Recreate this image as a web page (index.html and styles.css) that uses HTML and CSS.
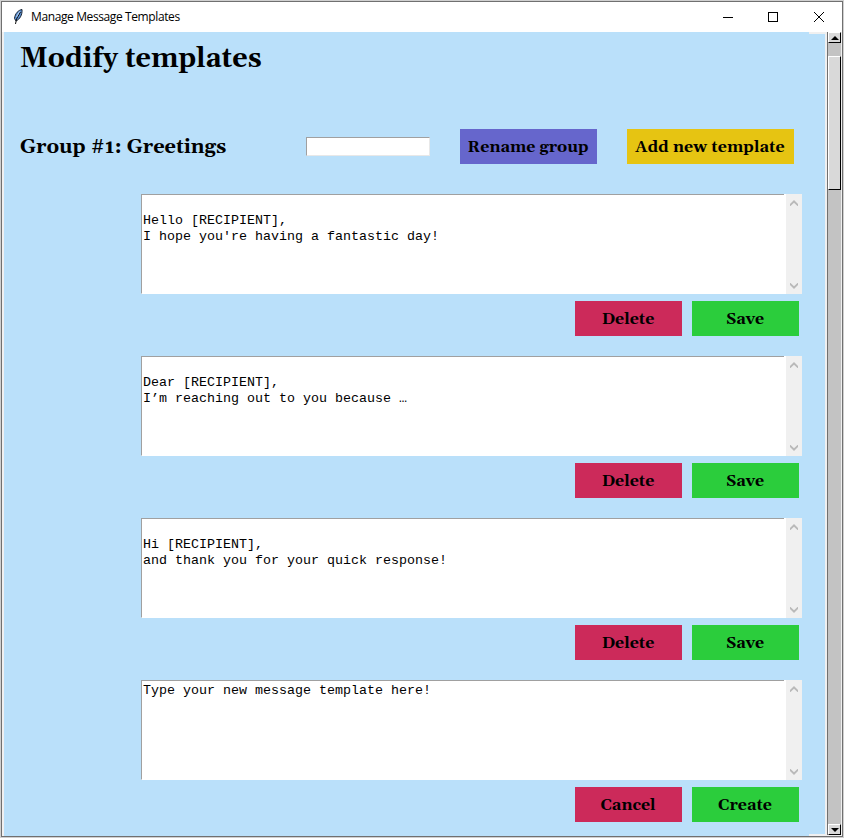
FILE: index.html
```html
<!DOCTYPE html>
<html lang="en">
<head>
<meta charset="utf-8">
<title>Manage Message Templates</title>
<link rel="stylesheet" href="styles.css">
</head>
<body>
<svg class="defs" width="0" height="0">
  <symbol id="up" viewBox="0 0 8 6"><path d="M0 4 4 0 8 4V6.500L4 2.800 0 6.500Z" fill="#b9b9b9"/></symbol>
  <symbol id="down" viewBox="0 0 8 6"><path d="M0 2 4 6 8 2V-.5L4 3.200 0-.5Z" fill="#b9b9b9"/></symbol>
</svg>
<div class="window">
  <header class="titlebar">
    <svg class="feather" width="12" height="16" viewBox="0 0 12 16">
      <path d="M10 .5C6.500 1 3 4.500 2.500 9.500L4 12C7.500 10.500 10.500 6 10 .5Z" fill="#5c92d6" stroke="#15202e"/>
      <path d="M8.500 3 4.500 10 3.500 15" fill="none" stroke="#111"/>
      <path d="M7.500 2.500 4.500 8" stroke="#b5d0f0"/>
    </svg>
    <span class="caption">Manage Message Templates</span>
    <svg class="controls" width="104" height="12" viewBox="0 0 104 12" fill="none" stroke="#000">
      <path d="M1 6.500H11"/><rect x="46.500" y="1.500" width="9" height="9"/><path d="M92 1 102 11M102 1 92 11"/>
    </svg>
  </header>
  <div class="body">
    <main class="canvas">
      <h1><span>Modify templates</span></h1>
      <section class="group">
        <h2><span>Group #1: Greetings</span></h2>
        <input class="entry" type="text" aria-label="Group name">
        <button class="btn rename"><span>Rename group</span></button>
        <button class="btn add"><span>Add new template</span></button>
      </section>
      <section class="template">
        <div class="editor"><pre class="text">

Hello [RECIPIENT],
I hope you're having a fantastic day!</pre><div class="scroll"><svg><use href="#up"/></svg><svg><use href="#down"/></svg></div></div>
        <div class="actions"><button class="btn red"><span>Delete</span></button><button class="btn green"><span>Save</span></button></div>
      </section>
      <section class="template">
        <div class="editor"><pre class="text">

Dear [RECIPIENT],
I’m reaching out to you because …</pre><div class="scroll"><svg><use href="#up"/></svg><svg><use href="#down"/></svg></div></div>
        <div class="actions"><button class="btn red"><span>Delete</span></button><button class="btn green"><span>Save</span></button></div>
      </section>
      <section class="template">
        <div class="editor"><pre class="text">

Hi [RECIPIENT],
and thank you for your quick response!</pre><div class="scroll"><svg><use href="#up"/></svg><svg><use href="#down"/></svg></div></div>
        <div class="actions"><button class="btn red"><span>Delete</span></button><button class="btn green"><span>Save</span></button></div>
      </section>
      <section class="template">
        <div class="editor"><pre class="text">Type your new message template here!</pre><div class="scroll"><svg><use href="#up"/></svg><svg><use href="#down"/></svg></div></div>
        <div class="actions"><button class="btn red"><span>Cancel</span></button><button class="btn green"><span>Create</span></button></div>
      </section>
    </main>
    <aside class="scrollbar">
      <div class="arrow"><svg width="8" height="4"><path d="M0 4 4 0 8 4Z"/></svg></div>
      <div class="track"><div class="thumb"></div></div>
      <div class="arrow"><svg width="8" height="4"><path d="M0 0H8L4 4Z"/></svg></div>
    </aside>
  </div>
</div>
</body>
</html>
```
FILE: styles.css
```css
* { box-sizing: border-box; }
body { margin: 0; width: 844px; height: 838px; padding: 1px; background: #d0d0d0; overflow: hidden; }
.defs { display: none; }
.window { width: 842px; height: 836px; border: 1px solid #707070; background: #f0f0f0; display: flex; flex-direction: column; }
.titlebar { height: 30px; flex: none; background: #fff; display: flex; align-items: center; padding: 0 16px 0 10px; }
.caption { font: 12px/16px "Open Sans", sans-serif; letter-spacing: -0.39px; margin-left: 7px; flex: 1; color: #000; }
.body { flex: 1; display: flex; min-height: 0; padding-left: 2px; }
.canvas {
  width: 821px;
  color: #000;
  font-family: Georgia, Gelasio, "Noto Serif", "DejaVu Serif", serif;
  background:
    linear-gradient(#f0f0f0, #f0f0f0) right top / 16px 2px no-repeat,
    linear-gradient(#f0f0f0, #f0f0f0) right bottom / 16px 2px no-repeat,
    #bae0fa;
}
h1, h2 { margin: 0; font-weight: bold; white-space: nowrap; }
h1 { font-size: 27px; line-height: 36px; padding: 9px 0 0 16px; height: 97px; }
.group { height: 35px; display: flex; align-items: center; padding-left: 16px; }
h2 { width: 286px; font-size: 20px; line-height: 24px; letter-spacing: -0.06px; }
.entry { width: 124px; height: 19px; padding: 0; border: 1px solid; border-color: #a0a0a0 #e8e8e8 #e8e8e8 #a0a0a0; background: #fff; margin-right: 30px; }
.btn { border: 0; padding: 1px 1px 0 0; height: 35px; color: #000; font-family: inherit; font-weight: bold; font-size: 16px; line-height: 34px; white-space: nowrap; }
.btn span, h1 span, h2 span { display: inline-block; }
.rename { width: 137px; background: #6666cc; margin-right: 30px; }
.add { width: 167px; background: #e6c412; letter-spacing: 0.08px; }
.template { height: 132px; margin: 30px 0 0 137px; width: 661px; }
.editor { height: 100px; display: flex; background: #fff; }
.text { flex: 1; margin: 0 2px 0 0; padding: 2px 0 0 1px; border: 1px solid; border-color: #a0a0a0 #fff #fff #a0a0a0; border-right: 0; font: 13.6px/16px "Liberation Mono", monospace; font-size: 13.333px; white-space: pre; }
.scroll { width: 16px; background: #f0f0f0; display: flex; flex-direction: column; justify-content: space-between; align-items: center; padding: 6px 1px 5px 0; }
.scroll svg { width: 8px; height: 6px; overflow: visible; }
.actions { display: flex; justify-content: flex-end; gap: 10px; padding: 7px 3px 0 0; }
.actions .btn { width: 107px; }
.red { background: #cc2a5a; }
.green { background: #2bcd3c; }
.scrollbar { margin: 0 0 1px 2px; width: 14px; border-left: 1px solid #707070; background: #c3c3c3; display: flex; flex-direction: column; }
.arrow { height: 11px; background: #d9d9d9; border: 1px solid; border-color: #fff #000 #000 #fff; display: flex; align-items: center; justify-content: center; }
.track { flex: 1; padding-top: 13px; }
.thumb { height: 134px; background: #d9d9d9; border: 1px solid; border-color: #fff #000 #000 #fff; }
```
